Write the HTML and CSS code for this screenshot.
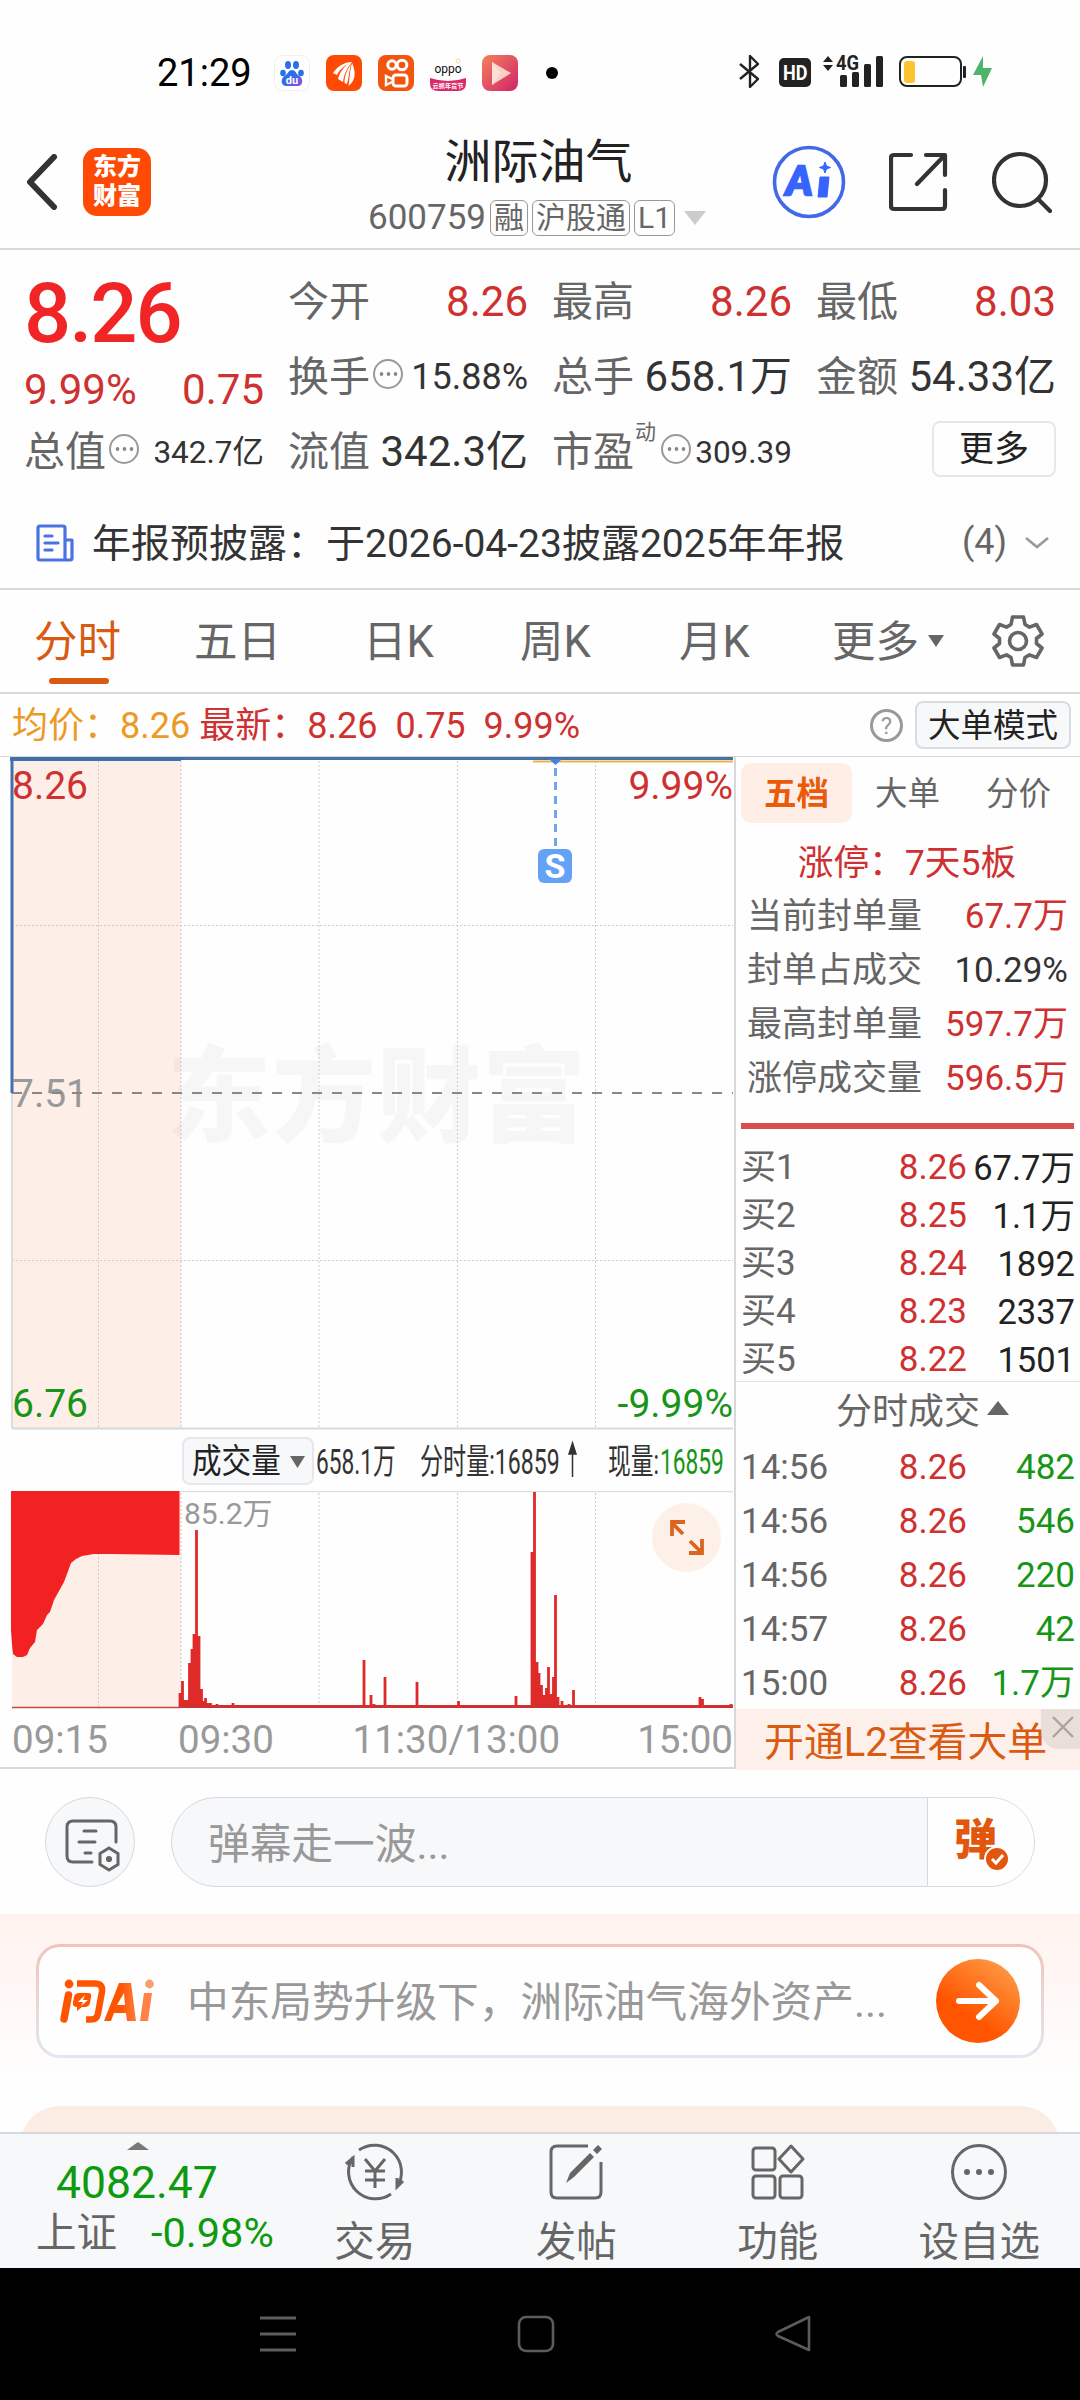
FILE: index.html
```
<!DOCTYPE html>
<html lang="zh-CN">
<head>
    <meta charset="UTF-8">
    <meta name="viewport" content="width=device-width, initial-scale=1.0">
    <title>洲际油气 600759</title>
    <link rel="stylesheet" href="styles.css">
</head>
<body>
    <!-- 状态栏 -->
    <div class="status">
        <span class="clock">21:29</span>
        <div class="apps">
            <svg width="36" height="36" viewBox="0 0 36 36">
                <defs><linearGradient id="paw" x1="0" y1="0" x2="1" y2="1"><stop offset=".4" stop-color="#2a6fe8"/><stop offset="1" stop-color="#a04be0"/></linearGradient></defs>
                <rect x=".5" y=".5" width="35" height="35" rx="8" fill="#fff" stroke="#f0f0f0"/>
                <ellipse cx="9" cy="18" rx="2.800" ry="3.200" fill="#2a6fe8"/>
                <ellipse cx="14" cy="10" rx="3" ry="4" fill="#2a6fe8"/>
                <ellipse cx="22" cy="10" rx="3" ry="4" fill="#2a6fe8"/>
                <ellipse cx="27" cy="18" rx="2.800" ry="3.200" fill="#2a6fe8"/>
                <path d="M18 15c3 0 4 3 6 5 3 2 5 4 4 8-1 4-5 3-10 3s-9 1-10-3c-1-4 1-6 4-8 2-2 3-5 6-5z" fill="url(#paw)"/>
                <text x="18" y="29" text-anchor="middle" font-size="11" font-weight="700" fill="#fff">du</text>
            </svg>
            <svg width="36" height="36" viewBox="0 0 36 36">
                <rect width="36" height="36" rx="8" fill="#ff4a05"/>
                <path d="M7 18C12 11 18 7 26 7 19 10 14 14 11 20zM12 24C14 16 19 10 26 7 21 13 18 19 17 27zM22.500 31c1.500-8 1-15 3.500-23 4 9 4 17-3.500 23zM18.500 28c0-8 3-14 6.500-19-2 7-2 13-4 20z" fill="#fff"/>
            </svg>
            <svg width="36" height="36" viewBox="0 0 36 36" fill="none" stroke="#fff" stroke-width="3">
                <rect width="36" height="36" rx="8" fill="#f2560e" stroke="none"/>
                <circle cx="14" cy="10" r="4.2"/><circle cx="24" cy="10" r="4.8"/>
                <rect x="15" y="20" width="14" height="11" rx="3"/>
                <path d="M14 24l-6-3v9l6-3" stroke-width="2.4"/>
            </svg>
            <svg width="36" height="36" viewBox="0 0 36 36">
                <path d="M0 23q18 6 36 0v5q0 8-8 8H8q-8 0-8-8z" fill="#dc2868"/>
                <text x="18" y="18" text-anchor="middle" font-size="12" fill="#111">oppo</text>
                <text x="18" y="33" text-anchor="middle" font-size="6.200" font-weight="700" fill="#fff">云抓年货节</text>
                <circle cx="28" cy="6" r="2" fill="none" stroke="#f5d9a8"/>
            </svg>
            <svg width="36" height="36" viewBox="0 0 36 36">
                <defs><linearGradient id="play" x1="0" y1="0" x2="1" y2="1"><stop offset="0" stop-color="#f4815d"/><stop offset="1" stop-color="#d02468"/></linearGradient></defs>
                <rect width="36" height="36" rx="8" fill="url(#play)"/>
                <path d="M10 7l19 11L10 30z" fill="#fbd0c4"/><path d="M10 7l9 11-9 12z" fill="#fde0d8"/>
            </svg>
            <i class="dot"></i>
        </div>
        <svg class="signals" width="256" height="40" viewBox="0 -4 256 40">
            <path d="M1 10l18 15-8 8V2l8 8L1 25" fill="none" stroke="#222" stroke-width="2.4" stroke-linejoin="round"/>
            <rect x="40" y="4" width="32" height="29" rx="5" fill="#222"/>
            <text transform="translate(44 26) scale(.86 1)" font-size="21" font-weight="700" fill="#fff">HD</text>
            <path d="M84 8l5-6 5 6zM84 11h10l-5 6z" fill="#222"/>
            <text transform="translate(97 16) scale(.92 1)" font-size="20" font-weight="700" fill="#222">4G</text>
            <g fill="#222">
                <rect x="101" y="21" width="7" height="12" rx="1.5"/>
                <rect x="113" y="18" width="7" height="15" rx="1.5"/>
                <rect x="125" y="10" width="7" height="23" rx="1.5"/>
                <rect x="137" y="2" width="7" height="31" rx="1.5"/>
            </g>
            <rect x="161" y="3" width="61" height="29" rx="7" fill="none" stroke="#222" stroke-width="2"/>
            <rect x="165" y="7" width="11" height="22" rx="3" fill="#fdc331"/>
            <rect x="224" y="12" width="3" height="12" rx="1" fill="#222"/>
            <path d="M244 2l-10 19h8l2 12 9-19h-9z" fill="#4fb46b"/>
        </svg>
    </div>

    <!-- 顶部标题 -->
    <header class="header">
        <div class="side">
            <svg width="32" height="56" viewBox="0 0 32 56"><path d="M28 3L4 28l24 25" fill="none" stroke="#333" stroke-width="6" stroke-linecap="round" stroke-linejoin="round"/></svg>
            <div class="logo">东方<br>财富</div>
        </div>
        <div class="title">
            <h1>洲际油气</h1>
            <p><span>600759</span><em>融</em><em>沪股通</em><em>L1</em><i class="tri-down"></i></p>
        </div>
        <div class="tools">
            <svg width="74" height="74" viewBox="0 0 74 74">
                <circle cx="37" cy="37" r="34.5" fill="none" stroke="#4169e8" stroke-width="3.6"/>
                <text x="14" y="50" font-family="Lato" font-size="40" font-weight="900" font-style="italic" fill="#3764ff" stroke="#3764ff" stroke-width="2.500">A</text>
                <path d="M48 32h9l-2 20h-9z" fill="#3764ff" stroke="#3764ff" stroke-linejoin="round"/>
                <path d="M53 17l1.500 4 4 1.500-4 1.500-1.500 4-1.500-4-4-1.500 4-1.500z" fill="#3764ff" stroke="#3764ff"/>
            </svg>
            <svg width="60" height="60" viewBox="0 0 60 60" fill="none" stroke="#333" stroke-width="4.2" stroke-linecap="round" stroke-linejoin="round">
                <path d="M22 3H5q-3 0-3 3v48q0 3 3 3h48q3 0 3-3V38M37 3h19v20M55 4L28 32"/>
            </svg>
            <svg width="60" height="62" viewBox="0 0 60 62" fill="none" stroke="#333" stroke-width="4.2" stroke-linecap="round">
                <circle cx="28" cy="29" r="26"/><path d="M46 48l12 12"/>
            </svg>
        </div>
    </header>

    <!-- 报价 -->
    <section class="quote">
        <div class="price">
            <strong>8.26</strong>
            <p><span>9.99%</span><span>0.75</span></p>
        </div>
        <div class="cell"><label>今开</label><b class="red">8.26</b></div>
        <div class="cell"><label>最高</label><b class="red">8.26</b></div>
        <div class="cell"><label>最低</label><b class="red">8.03</b></div>
        <div class="cell"><label>换手</label><i class="more-dot"></i><b class="mid">15.88%</b></div>
        <div class="cell"><label>总手</label><b>658.1万</b></div>
        <div class="cell"><label>金额</label><b>54.33亿</b></div>
        <div class="cell"><label>总值</label><i class="more-dot"></i><b class="small">342.7亿</b></div>
        <div class="cell"><label>流值</label><b>342.3亿</b></div>
        <div class="cell"><label>市盈</label><sup>动</sup><i class="more-dot"></i><b class="small">309.39</b></div>
        <div class="cell"><button class="more-btn">更多</button></div>
    </section>

    <!-- 公告 -->
    <div class="news">
        <svg width="38" height="38" viewBox="0 0 38 38" fill="none" stroke="#4a72e0" stroke-width="3.2" stroke-linejoin="round" stroke-linecap="round">
            <path d="M29 36H4q-2 0-2-2V4q0-2 2-2h23q2 0 2 2v30q0 2 2 2h3q2 0 2-2V16h-7M9 12h7M9 19h13M9 26h7"/>
        </svg>
        <p>年报预披露：于2026-04-23披露2025年年报</p>
        <span>(4)</span>
        <svg width="26" height="14" viewBox="0 0 26 14"><path d="M2 2l11 9L24 2" fill="none" stroke="#999" stroke-width="2.6"/></svg>
    </div>

    <!-- 周期切换 -->
    <nav class="tabs">
        <a class="on">分时</a><a>五日</a><a>日K</a><a>周K</a><a>月K</a>
        <a class="drop">更多<i></i></a>
        <svg width="54" height="54" viewBox="0 0 54 54" fill="none" stroke="#666" stroke-width="3.6" stroke-linejoin="round">
            <path d="M21.500 3h11l1.500 7.500 4.500 2.600 7-2.600 5.500 9.500-5.500 4.500v5l5.500 4.500-5.500 9.500-7-2.600-4.500 2.600-1.500 7.500h-11l-1.500-7.500-4.500-2.600-7 2.600-5.500-9.500 5.500-4.500v-5l-5.500-4.500 5.500-9.500 7 2.600 4.500-2.600z"/>
            <circle cx="27" cy="27" r="8.500"/>
        </svg>
    </nav>

    <div class="info">
        <span class="avg">均价：8.26</span>
        <span class="red last">最新：8.26</span>
        <span class="red">0.75</span>
        <span class="red">9.99%</span>
        <i class="help">?</i>
        <button class="mode">大单模式</button>
    </div>

    <main class="main">
        <div class="charts">
            <!-- 分时图 -->
            <svg class="line-chart" width="734" height="673" viewBox="0 0 734 673">
                <rect x="12" y="2" width="169" height="669" fill="#fdeee7"/>
                <text x="167" y="377" font-size="104" font-weight="900" letter-spacing="1" fill="#000" fill-opacity=".03">东方财富</text>
                <path d="M98.500 4v667M181 4v667M319 4v667M457.500 4v667M595.500 4v667M12 168.500h721M12 503.500h721" stroke="#ccc" stroke-width="1" stroke-dasharray="2 2" fill="none"/>
                <path d="M12 336v335" stroke="#ddd" stroke-width="2"/>
                <path d="M12 671.500h721" stroke="#d8d8d8" stroke-width="2"/>
                <text x="12" y="350" font-size="39" fill="#999">7.51</text>
                <path d="M12 336h721" stroke="#888" stroke-width="2" stroke-dasharray="10 10"/>
                <path d="M12 336V2" stroke="#3e70ae" stroke-width="3"/>
                <path d="M533 4.500h200" stroke="#e8b350" stroke-width="2"/>
                <path d="M10 1.500h723" stroke="#4472a4" stroke-width="3"/>
                <path d="M10 2h171" stroke="#3e70ae" stroke-width="4"/>
                <path d="M549 2h13l-6.500 6z" fill="#3b82e8"/>
                <path d="M555.500 11v82" stroke="#6fa6f0" stroke-width="3" stroke-dasharray="8 6"/>
                <rect x="538" y="92" width="34" height="34" rx="6" fill="#64a2f5"/>
                <text x="555" y="121" font-size="34" font-weight="700" text-anchor="middle" fill="#fff">S</text>
                <text x="12" y="42" font-size="39" fill="#cf3030">8.26</text>
                <text x="733" y="42" font-size="39" text-anchor="end" fill="#cf3030">9.99%</text>
                <text x="12" y="660" font-size="39" fill="#179517">6.76</text>
                <text x="733" y="660" font-size="39" text-anchor="end" fill="#179517">-9.99%</text>
            </svg>
            <div class="legend">
                <button>
                    <svg width="129" height="46" viewBox="0 0 129 46">
                        <text transform="translate(8 34) scale(.87 1)" font-size="34" fill="#222">成交量</text>
                        <path d="M106 17h15l-7.500 12z" fill="#666"/>
                    </svg>
                </button>
                <svg width="420" height="62" viewBox="0 0 420 62" font-size="35" fill="#333">
                    <text transform="translate(2 44) scale(.648 1)">658.1万</text>
                    <text transform="translate(106 44) scale(.66 1)">分时量:16859</text>
                    <path d="M258.500 47V18M258.500 13l-3.500 11h7z" stroke="#333" stroke-width="1.500"/>
                    <text transform="translate(294 44) scale(.65 1)">现量:</text>
                    <text transform="translate(346 44) scale(.65 1)" fill="#179517">16859</text>
                </svg>
            </div>
            <!-- 成交量 -->
            <svg class="volume" width="734" height="218" viewBox="0 1491 734 218">
                <rect x="12" y="1491" width="169" height="217" fill="#fdeee7"/>
                <path d="M98.500 1493v215M181 1493v215M319 1493v215M457.500 1493v215M595.500 1493v215" stroke="#ccc" stroke-dasharray="2 2"/>
                <path d="M12 1491.500h721" stroke="#ddd" stroke-width="1.500"/>
                <path d="M11 1491H179.500V1555L112 1554H94L82 1556 76 1559 71 1563 67 1574 64 1582 59 1591 54 1600 50 1612 47 1615 43 1624 37 1630 35 1642 30 1648 27 1655 23 1657H17L13 1654 12 1645 11 1630z" fill="#f22222"/>
                <path fill="none" stroke="#df2a2a" stroke-width="2.800" d="M180 1708v-15M182.500 1708v-27M185 1708v-8M187 1708v-8M189.500 1708v-45M192 1708v-59M194 1708v-74M196.500 1708v-178M199 1708v-72M201.500 1708v-19M203.500 1708v-7M205.500 1708v-10M208 1708v-5M210.500 1708v-5M217 1708v-4M233 1708v-5M364 1708v-48M371 1708v-13M374 1708v-4M385 1708v-31M417 1708v-26M458.500 1708v-7M516 1708v-12M532 1708v-156M534.500 1708v-216M537 1708v-46M539 1708v-35M541.500 1708v-23M544 1708v-13M546.500 1708v-20M548.500 1708v-41M551 1708v-14M553.500 1708v-31M555.500 1708v-113M558 1708v-11M562 1708v-7M569 1708v-4M573.500 1708v-18M700 1708v-11M702.500 1708v-9M731 1708v-4"/>
                <path d="M12 1707.500h168" stroke="#c24a42" stroke-width="1.500"/>
                <path d="M180 1706.500h553" stroke="#cf3030" stroke-width="3"/>
                <text x="184" y="1524" font-size="30" fill="#999">85.2万</text>
                <circle cx="686.500" cy="1537.500" r="34.500" fill="#fdf0e9"/>
                <path d="M683 1534l-11-11M672 1536v-14h13M690 1541l11 11M702 1539v14h-13" fill="none" stroke="#dc6420" stroke-width="3.800"/>
            </svg>
            <div class="axis">
                <span>09:15</span><span>09:30</span><span>11:30/13:00</span><span>15:00</span>
            </div>
        </div>

        <!-- 盘口 -->
        <aside class="book">
            <div class="book-tabs"><a class="on">五档</a><a>大单</a><a>分价</a></div>
            <p class="limit">涨停：7天5板</p>
            <ul class="stats">
                <li><span>当前封单量</span><b class="red">67.7万</b></li>
                <li><span>封单占成交</span><b>10.29%</b></li>
                <li><span>最高封单量</span><b class="red">597.7万</b></li>
                <li><span>涨停成交量</span><b class="red">596.5万</b></li>
            </ul>
            <hr>
            <ul class="rows bids">
                <li><span>买1</span><i>8.26</i><b>67.7万</b></li>
                <li><span>买2</span><i>8.25</i><b>1.1万</b></li>
                <li><span>买3</span><i>8.24</i><b>1892</b></li>
                <li><span>买4</span><i>8.23</i><b>2337</b></li>
                <li><span>买5</span><i>8.22</i><b>1501</b></li>
            </ul>
            <h2>分时成交<i></i></h2>
            <ul class="rows deals">
                <li><span>14:56</span><i>8.26</i><b>482</b></li>
                <li><span>14:56</span><i>8.26</i><b>546</b></li>
                <li><span>14:56</span><i>8.26</i><b>220</b></li>
                <li><span>14:57</span><i>8.26</i><b>42</b></li>
                <li><span>15:00</span><i>8.26</i><b>1.7万</b></li>
            </ul>
            <div class="l2">开通L2查看大单
                <span class="close"><svg width="22" height="22" viewBox="0 0 22 22"><path d="M1 1l20 20M21 1L1 21" stroke="#aaa29e" stroke-width="2.400"/></svg></span>
            </div>
        </aside>
    </main>

    <!-- 弹幕 -->
    <div class="danmu">
        <div class="set">
            <svg width="56" height="54" viewBox="0 0 56 54" fill="none" stroke="#666" stroke-width="3" stroke-linecap="round">
                <path d="M28 44H9q-6 0-6-6V9q0-6 6-6h37q6 0 6 6v15M20 13h12M15 24h16M21 35h6" />
                <path d="M45 30l9 5.500v11L45 52l-9-5.500v-11z"/><circle cx="45" cy="41" r="1.600" fill="#666"/>
            </svg>
        </div>
        <div class="input">
            <span>弹幕走一波...</span>
            <div class="send">
                <b>弹</b>
                <svg width="26" height="26" viewBox="0 0 26 26"><circle cx="13" cy="13" r="12" fill="#e2560e" stroke="#fff" stroke-width="2"/><path d="M8 13l4 4 7-8" fill="none" stroke="#fff" stroke-width="3"/></svg>
            </div>
        </div>
    </div>

    <!-- 问AI -->
    <section class="ask">
        <div class="ask-card">
            <svg width="98" height="46" viewBox="0 0 98 46">
                <defs><linearGradient id="ai" x1="0" x2="1"><stop offset=".5" stop-color="#ff5500"/><stop offset="1" stop-color="#ff7a38"/></linearGradient></defs>
                <g fill="none" stroke="#ff5500" stroke-width="7">
                    <path d="M11.500 17L7 41" stroke-width="7.500" stroke-linecap="round"/>
                    <path d="M20 5.500h18q8 0 7 8l-4 22q-1 6-7 6h-5" stroke-width="6.500"/>
                </g>
                <circle cx="12" cy="6" r="4.400" fill="#ff5500"/>
                <path d="M22 15h9q4 0 3 4l-1 6q-1 4-5 4h-3l-5 4v-4q-5 0-4-5l1-5q1-4 5-4z" fill="#ff5500"/>
                <path d="M28 17l-7 7h5l-2 4 7-6h-5z" fill="#fff"/>
                <path d="M47 43L62 5h12l5 38h-9l-1-8H57l-3 8zM60 27h8l-1-12z" fill="url(#ai)" fill-rule="evenodd"/>
                <path d="M87 15h8l-4 28h-8z" fill="#ff8145"/>
                <circle cx="92.500" cy="6" r="4.400" fill="#f79f73"/>
            </svg>
            <p>中东局势升级下，洲际油气海外资产...</p>
            <div class="go"><svg width="44" height="40" viewBox="0 0 44 40"><path d="M3 20h37M23 4l17 16-17 16" fill="none" stroke="#fff" stroke-width="6" stroke-linecap="round" stroke-linejoin="round"/></svg></div>
        </div>
        <div class="next-card"></div>
    </section>

    <!-- 底部工具栏 -->
    <footer class="bottom">
        <div class="index">
            <i></i>
            <strong>4082.47</strong>
            <p><span>上证</span><b>-0.98%</b></p>
        </div>
        <div class="item">
            <svg width="66" height="60" viewBox="0 0 66 60" fill="none" stroke="#666" stroke-width="3">
                <path d="M17 8A27 27 0 0 1 55 45M61 39l-6 6v-9M49 52A27 27 0 0 1 11 15M4 22l7-6v9M23 17l10 12 10-12M33 29v17M23 29h20M23 38h20"/>
            </svg>
            <span>交易</span>
        </div>
        <div class="item">
            <svg width="56" height="60" viewBox="0 0 56 60" fill="none" stroke="#666" stroke-width="3">
                <path d="M40 4H9Q3 4 3 10v40q0 6 6 6h38q6 0 6-6V20"/>
                <path d="M18 41l4-10 20-20 4 4-20 20zM45 8l5-5 4 4-5 5z" fill="#666" stroke="none"/>
            </svg>
            <span>发帖</span>
        </div>
        <div class="item">
            <svg width="56" height="60" viewBox="0 0 56 60" fill="none" stroke="#666" stroke-width="3">
                <rect x="3" y="6" width="22" height="22" rx="3"/><rect x="3" y="34" width="22" height="22" rx="3"/><rect x="30" y="34" width="22" height="22" rx="3"/>
                <path d="M41 4l12 13-12 13-12-13z" stroke-linejoin="round"/>
            </svg>
            <span>功能</span>
        </div>
        <div class="item">
            <svg width="60" height="60" viewBox="0 0 60 60">
                <circle cx="30" cy="30" r="26.500" fill="none" stroke="#666" stroke-width="3"/>
                <g fill="#666"><circle cx="18" cy="30" r="3"/><circle cx="30" cy="30" r="3"/><circle cx="42" cy="30" r="3"/></g>
            </svg>
            <span>设自选</span>
        </div>
    </footer>

    <div class="sysnav">
        <svg width="38" height="38" viewBox="0 0 38 38" fill="none" stroke="#5c5c5c" stroke-width="3"><path d="M1 3h36M1 19h36M1 35h36"/></svg>
        <svg width="38" height="38" viewBox="0 0 38 38" fill="none" stroke="#5c5c5c" stroke-width="2.600"><rect x="2" y="2" width="34" height="34" rx="7"/></svg>
        <svg width="38" height="38" viewBox="0 0 38 38" fill="none" stroke="#5c5c5c" stroke-width="2.600" stroke-linejoin="round"><path d="M35 2v33L4 21q-3-2 0-4z"/></svg>
    </div>
</body>
</html>
```
FILE: styles.css
```
* {
    box-sizing: border-box;
    margin: 0;
    padding: 0;
}

body {
    width: 1080px;
    height: 2400px;
    overflow: hidden;
    background: #fefefe;
    color: #333;
    font-family: Roboto, "Noto Sans CJK SC", sans-serif;
    line-height: 1.2;
}

svg {
    display: block;
    flex: none;
}

ul {
    list-style: none;
}

i, em {
    font-style: normal;
}

b {
    font-weight: 400;
}

button {
    font: inherit;
    color: #222;
    border: 2px solid #e5e7ea;
    border-radius: 8px;
    background: #fefefe;
}

.red {
    color: #cf3030;
}

/* 状态栏 */
.status {
    height: 104px;
    padding: 40px 85px 0 157px;
    display: flex;
    align-items: flex-start;
}

.clock {
    width: 117px;
    height: 64px;
    line-height: 67px;
    font-size: 38px;
    color: #000;
}

.apps {
    display: flex;
    gap: 16px;
    align-items: center;
    padding-top: 15px;
}

.dot {
    width: 12px;
    height: 12px;
    margin-left: 12px;
    border-radius: 50%;
    background: #000;
}

.signals {
    margin: 10px 0 0 auto;
}

/* 顶部标题 */
.header {
    height: 146px;
    padding: 0 28px 0 26px;
    border-bottom: 2px solid #d8d8d8;
    display: flex;
    justify-content: space-between;
}

.side, .tools {
    display: flex;
    align-items: center;
    height: 156px;
    width: 280px;
}

.side {
    gap: 25px;
}

.logo {
    width: 68px;
    height: 68px;
    border-radius: 14px;
    background: #ff4a05;
    color: #fff;
    font-size: 24px;
    font-weight: 900;
    line-height: 29px;
    padding-top: 5px;
    text-align: center;
}

.tools {
    justify-content: space-between;
}

.title {
    padding-top: 30px;
    margin-left: -4px;
}

.title h1 {
    font-size: 47px;
    font-weight: 400;
    line-height: 56px;
    height: 62px;
    text-align: center;
    padding-left: 3px;
    color: #222;
}

.title p {
    display: flex;
    align-items: center;
    height: 44px;
    font-size: 35px;
    color: #666;
}

.title em {
    height: 36px;
    line-height: 34px;
    margin-left: 4px;
    padding: 0 3px;
    border: 1.5px solid #999;
    border-radius: 6px;
    font-size: 30px;
}

.tri-down {
    margin-left: 9px;
    border: 11px solid transparent;
    border-top: 14px solid #ccc;
    border-bottom: 0;
}

/* 报价 */
.quote {
    height: 239px;
    padding: 15px 24px 0;
    display: grid;
    grid-template-columns: repeat(4, 240px);
    grid-template-rows: repeat(3, 75px);
    column-gap: 24px;
}

.price {
    grid-row: span 2;
    color: #cf3030;
    font-size: 42px;
}

.price strong {
    display: block;
    font-size: 83px;
    line-height: 98px;
    font-weight: 500;
    color: #f12525;
    letter-spacing: -2px;
}

.price p {
    display: flex;
    justify-content: space-between;
    line-height: 54px;
}

.cell {
    display: flex;
    align-items: center;
    font-size: 42px;
    white-space: nowrap;
}

.cell label {
    color: #666;
    font-size: 41px;
}

.cell b {
    margin-left: auto;
}

.cell .mid {
    font-size: 36px;
}

.cell .small {
    font-size: 31.500px;
}

.cell sup {
    font-size: 21px;
    line-height: 24px;
    color: #666;
    align-self: flex-start;
    margin: 5px 2px 0 1px;
}

.more-dot {
    display: flex;
    align-items: center;
    justify-content: center;
    width: 30px;
    height: 30px;
    margin: -7px 0 0 3px;
    border: 2.500px solid #999;
    border-radius: 50%;
}

.more-dot::after {
    content: '';
    width: 21px;
    height: 4px;
    background: radial-gradient(circle, #888 1.500px, transparent 2.200px) 0 0 / 7px 4px repeat-x;
}

.more-btn {
    width: 124px;
    height: 56px;
    margin: -7px 0 0 auto;
    font-size: 35px;
    line-height: 54px;
}

/* 公告 */
.news {
    height: 101px;
    padding: 8px 30px 0 36px;
    display: flex;
    align-items: center;
    border-bottom: 2px solid #d8d8d8;
    font-size: 39px;
}

.news p {
    margin-left: 18px;
    padding-top: 3px;
    flex: 1;
}

.news span {
    font-size: 36px;
    color: #666;
    margin-right: 17px;
}

/* 周期切换 */
.tabs {
    height: 104px;
    padding-left: 34px;
    border-bottom: 2px solid #d8d8d8;
    display: grid;
    grid-template-columns: 160px 169px 157px 159px 153px 159px auto;
    align-items: center;
    font-size: 43.500px;
    color: #666;
}

.tabs a {
    position: relative;
    padding-top: 5px;
}

.tabs .on {
    color: #d95a12;
}

.tabs .on::after {
    content: '';
    position: absolute;
    left: 15px;
    bottom: -14px;
    width: 60px;
    height: 6px;
    border-radius: 3px;
    background: #d95a12;
}

.drop {
    display: flex;
    align-items: center;
}

.drop i {
    margin: -6px 0 0 9px;
    border: 8px solid transparent;
    border-top: 12px solid #666;
    border-bottom: 0;
}

.info {
    height: 63px;
    padding: 0 9px 0 12px;
    border-bottom: 1px solid #d8d8d8;
    display: flex;
    align-items: center;
    font-size: 36px;
    white-space: nowrap;
}

.info span {
    margin-right: 18px;
    padding-top: 3px;
}

.info .avg {
    color: #eb9a26;
    margin-right: 9px;
}

.help {
    width: 33px;
    height: 33px;
    margin-left: auto;
    border: 3px solid #999;
    border-radius: 50%;
    color: #999;
    font-size: 24px;
    line-height: 28px;
    text-align: center;
}

.mode {
    width: 156px;
    height: 48px;
    margin-left: 12px;
    background: #f7f8fa;
    border-color: #d8dbe0;
    font-size: 32.500px;
    line-height: 46px;
}

/* 图表与盘口 */
.main {
    height: 1012px;
    display: flex;
    border-bottom: 2px solid #d8d8d8;
}

.charts {
    width: 734px;
}

.legend {
    height: 61px;
    padding-left: 182px;
    display: flex;
    align-items: center;
}

.legend button {
    width: 132px;
    height: 48px;
    background: #f7f8fa;
}

.axis {
    display: grid;
    grid-template-columns: 166px 1fr 1fr 96px;
    padding: 0 1px 0 12px;
    height: 58px;
    line-height: 62px;
    font-size: 38.500px;
    color: #999;
}

.axis span:nth-child(3) {
    margin-left: -55px;
}

.axis span:nth-child(4) {
    text-align: right;
}

.book {
    width: 346px;
    border-left: 2px solid #d8d8d8;
    padding-left: 5px;
    font-size: 35px;
}

.book-tabs {
    display: flex;
    padding-top: 6px;
    font-size: 32.500px;
    line-height: 62px;
    height: 66px;
    color: #666;
    text-align: center;
}

.book-tabs a {
    width: 111px;
    height: 60px;
}

.book-tabs .on {
    background: #feeee6;
    border-radius: 10px;
    color: #ea5a0c;
    font-weight: 700;
}

.limit {
    padding-right: 7px;
    height: 66px;
    line-height: 80px;
    text-align: center;
    font-size: 35.700px;
    color: #cf3030;
}

.stats {
    height: 234px;
    padding: 0 12px 0 6px;
    color: #666;
}

.stats li {
    display: flex;
    justify-content: space-between;
    height: 54px;
    line-height: 56px;
}

.stats b {
    color: #333;
}

.stats .red {
    color: #cf3030;
}

.book hr {
    height: 6px;
    border: 0;
    margin-right: 6px;
    background: #da4e4e;
}

.rows li {
    display: grid;
    grid-template-columns: 100px 126px 1fr;
    padding: 0 5px 0 0;
    text-align: right;
    white-space: nowrap;
}

.rows span {
    text-align: left;
    color: #666;
}

.rows i {
    color: #cf3030;
}

.bids {
    padding-top: 15px;
    height: 252px;
    line-height: 48px;
}

.bids b {
    color: #222;
    font-size: 34.500px;
}

.book h2 {
    height: 60px;
    margin-left: -5px;
    border-top: 1px solid #e2e2e2;
    padding: 3px 0 0 100px;
    display: flex;
    align-items: center;
    font-size: 36px;
    font-weight: 400;
    color: #666;
}

.book h2 i {
    margin: -11px 0 0 7px;
    border: 11px solid transparent;
    border-bottom: 14px solid #666;
    border-top: 0;
}

.deals {
    height: 268px;
    line-height: 54px;
}

.deals b {
    color: #179517;
}

.l2 {
    position: relative;
    height: 61px;
    margin-left: -5px;
    padding-left: 28px;
    background: #fdf0ea;
    color: #d95a12;
    font-size: 39.900px;
    line-height: 67px;
}

.close {
    position: absolute;
    right: 0;
    top: 0;
    width: 39px;
    height: 40px;
    padding: 7px 0 0 11px;
    border-bottom-left-radius: 18px;
    background: rgba(225, 214, 210, .7);
}

/* 弹幕 */
.danmu {
    height: 145px;
    padding: 28px 45px 0;
    display: flex;
    gap: 36px;
}

.set {
    width: 90px;
    height: 90px;
    padding: 20px 0 0 18px;
    border: 1.500px solid #d5d8dc;
    border-radius: 50%;
    background: #f7f8fa;
}

.input {
    flex: 1;
    height: 90px;
    border: 1.500px solid #d5d8dc;
    border-radius: 45px;
    background: #f7f8fa;
    overflow: hidden;
    display: flex;
    justify-content: space-between;
    padding-left: 36px;
    font-size: 41.700px;
    line-height: 93px;
    color: #999;
}

.send {
    position: relative;
    width: 107px;
    border-left: 1.500px solid #d5d8dc;
    background: #fefefe;
    padding-left: 26px;
}

.send b {
    display: block;
    font-size: 43px;
    line-height: 84px;
    font-weight: 900;
    color: #e2560e;
}

.send svg {
    position: absolute;
    left: 56px;
    top: 48px;
}

/* 问AI */
.ask {
    height: 218px;
    padding: 30px 36px 0;
    background: linear-gradient(#fff2ee, #fefefe 170px);
    overflow: hidden;
}

.ask-card {
    height: 114px;
    border: 3px solid transparent;
    border-radius: 24px;
    background: linear-gradient(#fefefe, #fefefe) padding-box, linear-gradient(#f1c4ba, #e1e7f1) border-box;
    display: flex;
    align-items: center;
    padding: 0 21px 0 18px;
}

.ask-card p {
    flex: 1;
    margin-left: 32px;
    padding-top: 4px;
    font-size: 41.700px;
    color: #999;
    white-space: nowrap;
}

.go {
    width: 84px;
    height: 84px;
    border-radius: 50%;
    background: linear-gradient(215deg, #ff9a45 10%, #ff5500 65%);
    display: flex;
    align-items: center;
    justify-content: center;
}

.next-card {
    height: 80px;
    margin: 48px -16px 0;
    border-radius: 42px;
    background: #fcede4;
}

/* 底部工具栏 */
.bottom {
    position: relative;
    height: 136px;
    background: #f7f8fa;
    border-top: 2px solid #d5d8dc;
    display: grid;
    grid-template-columns: 274px repeat(4, 1fr);
    font-size: 40.500px;
    color: #666;
}

.index {
    padding: 8px 0 0 36px;
}

.index i {
    display: block;
    width: 22px;
    margin-left: 91px;
    border: 11px solid transparent;
    border-bottom: 8px solid #777;
    border-top: 0;
}

.index strong {
    display: block;
    padding-left: 20px;
    font-size: 44.500px;
    font-weight: 400;
    line-height: 66px;
    color: #0e9a0e;
}

.index p {
    display: flex;
    gap: 34px;
    line-height: 34px;
}

.index b {
    font-size: 41.500px;
    color: #0e9a0e;
}

.item {
    display: flex;
    flex-direction: column;
    align-items: center;
    padding-top: 8px;
}

.item span {
    line-height: 60px;
    margin-top: 10px;
}

.sysnav {
    height: 132px;
    padding: 0 268px 0 259px;
    background: #000;
    display: flex;
    align-items: center;
    justify-content: space-between;
}
```
